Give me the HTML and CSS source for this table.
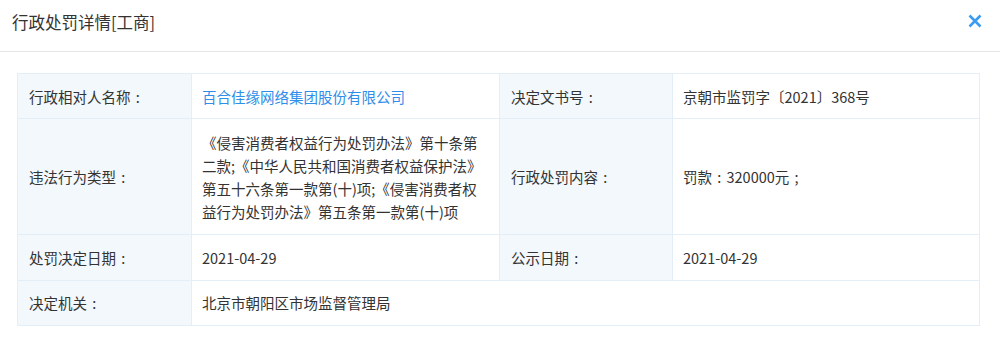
FILE: index.html
```html
<!DOCTYPE html>
<html lang="zh-CN">
<head>
<meta charset="utf-8">
<title>行政处罚详情</title>
<link rel="stylesheet" href="styles.css">
</head>
<body>
<div class="modal">
  <div class="modal-header">
    <span class="modal-title">行政处罚详情[工商]</span>
    <span class="close" aria-label="关闭">
      <svg width="14" height="14" viewBox="0 0 14 14"><path d="M1.5 1.5 L12.5 12.5 M12.5 1.5 L1.5 12.5" stroke="#3a9bf0" stroke-width="2.6" stroke-linecap="butt" fill="none"/></svg>
    </span>
  </div>
  <div class="modal-body">
    <table class="detail">
      <colgroup>
        <col class="c-label"><col class="c-value"><col class="c-label2"><col class="c-value2">
      </colgroup>
      <tr class="r1">
        <td class="label">行政相对人名称<span class="p">:</span></td>
        <td class="value"><a class="link">百合佳缘网络集团股份有限公司</a></td>
        <td class="label">决定文书号<span class="p">:</span></td>
        <td class="value">京朝市监罚字〔2021〕368号</td>
      </tr>
      <tr class="r2">
        <td class="label">违法行为类型<span class="p">:</span></td>
        <td class="value">《侵害消费者权益行为处罚办法》第十条第二款;《中华人民共和国消费者权益保护法》第五十六条第一款第(十)项;《侵害消费者权益行为处罚办法》第五条第一款第(十)项</td>
        <td class="label">行政处罚内容<span class="p">:</span></td>
        <td class="value">罚款<span class="p">:</span>320000元<span class="p">;</span></td>
      </tr>
      <tr class="r3">
        <td class="label">处罚决定日期<span class="p">:</span></td>
        <td class="value">2021-04-29</td>
        <td class="label">公示日期<span class="p">:</span></td>
        <td class="value">2021-04-29</td>
      </tr>
      <tr>
        <td class="label">决定机关<span class="p">:</span></td>
        <td class="value" colspan="3">北京市朝阳区市场监督管理局</td>
      </tr>
    </table>
  </div>
</div>
</body>
</html>
```
FILE: styles.css
```css
html, body {
  margin: 0;
  padding: 0;
  background: #fff;
}
body {
  font-family: "Noto Sans CJK SC", "Noto Sans", sans-serif;
  color: #333;
}
.modal-header {
  height: 51px;
  border-bottom: 1px solid #e6e6e6;
  display: flex;
  align-items: center;
  justify-content: space-between;
  padding: 0 18px 0 12px;
  box-sizing: content-box;
}
.modal-title {
  font-size: 16.5px;
  color: #333;
  line-height: 22px;
  margin-top: -8px;
}
.close {
  display: flex;
  width: 14px;
  height: 14px;
  margin-top: -9px;
}
.modal-body {
  padding: 21px 21px 0 17px;
}
.detail {
  width: 962px;
  border-collapse: collapse;
  table-layout: fixed;
  font-size: 14.5px;
  line-height: 23px;
}
.c-label { width: 174px; }
.c-value { width: 308px; }
.c-label2 { width: 173px; }
.c-value2 { width: 307px; }
.detail td {
  border: 1px solid #e4eef6;
  padding: 10.5px 10px 10.5px 10px;
  vertical-align: middle;
  color: #333;
}
.detail td.label {
  background: #f2f8fc;
  padding-left: 11px;
}
.detail tr.r2 td {
  padding-top: 11.5px;
  padding-bottom: 11.5px;
}
.detail tr.r3 td {
  padding-top: 11px;
}
.p {
  display: inline-block;
  width: 1em;
  text-align: center;
}
.link {
  color: #2f8ee9;
  text-decoration: none;
}
```
